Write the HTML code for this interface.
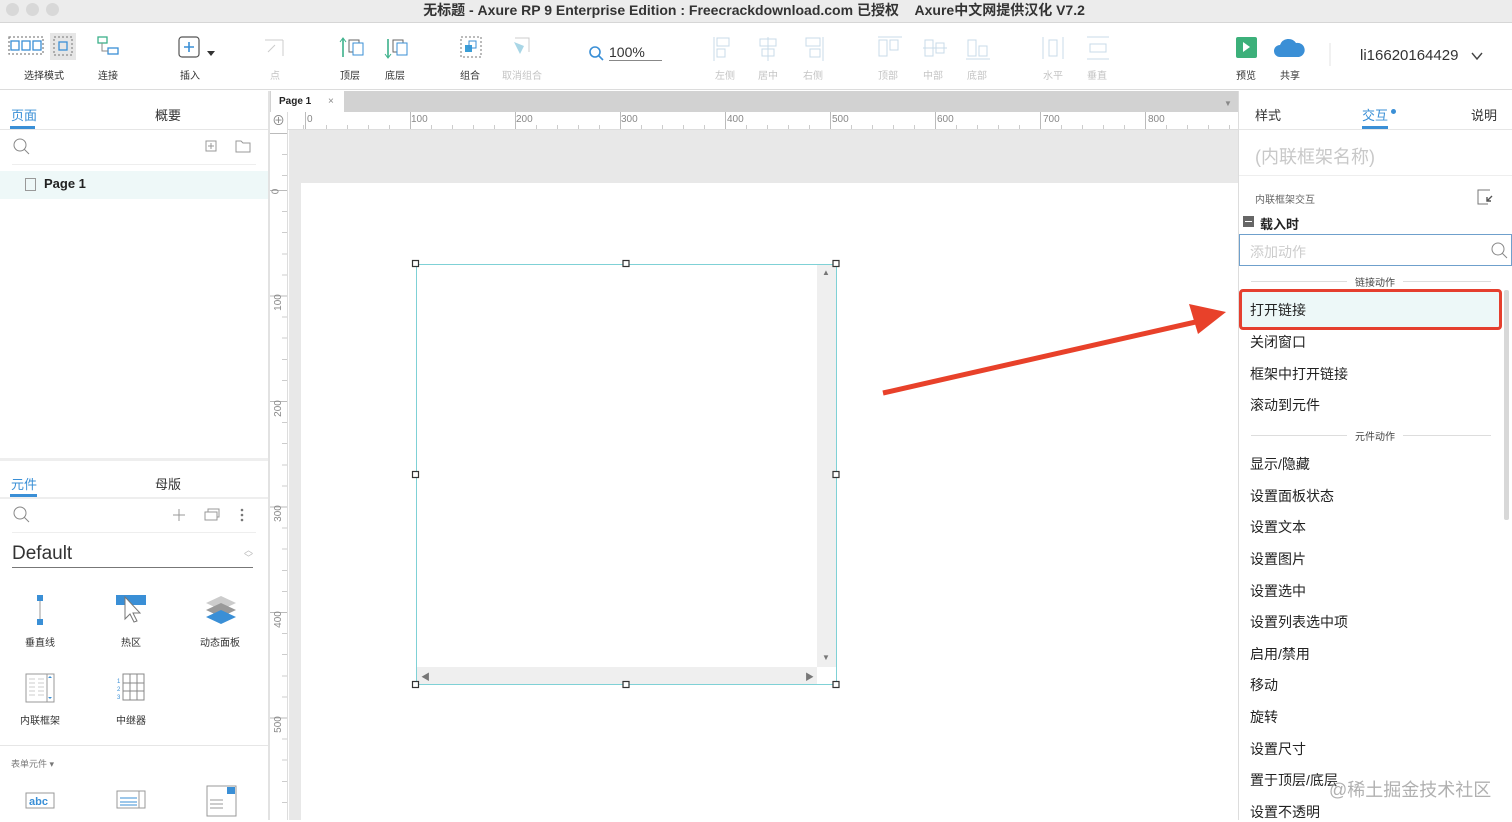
<!DOCTYPE html>
<html><head><meta charset="utf-8">
<style>
*{margin:0;padding:0;box-sizing:border-box}
body{width:1512px;height:820px;overflow:hidden;position:relative;background:#fff;font-family:"Liberation Sans","Noto Sans CJK SC",sans-serif;color:#333}
.a{position:absolute}
.lbl{position:absolute;font-size:10px;color:#333;transform:translateX(-50%);white-space:nowrap;top:67px}
.g{color:#c4c4c4}
.menu div.it{position:absolute;left:11px;font-size:14px;color:#222}
</style></head><body>
<!-- title bar -->
<div class="a" style="left:0;top:0;width:1512px;height:23px;background:#ececec;border-bottom:1px solid #d6d6d6"></div>
<div class="a" style="left:6px;top:3px;width:13px;height:13px;border-radius:50%;background:#d8d8d8"></div>
<div class="a" style="left:26px;top:3px;width:13px;height:13px;border-radius:50%;background:#d8d8d8"></div>
<div class="a" style="left:46px;top:3px;width:13px;height:13px;border-radius:50%;background:#d8d8d8"></div>
<div class="a" style="left:0;width:1508px;top:0px;text-align:center;font-size:14px;color:#333;font-weight:bold">无标题 - Axure RP 9 Enterprise Edition : Freecrackdownload.com 已授权&nbsp;&nbsp;&nbsp;&nbsp;Axure中文网提供汉化 V7.2</div>
<!-- toolbar -->
<div class="a" style="left:0;top:24px;width:1512px;height:66px;background:#fff;border-bottom:1px solid #dcdcdc"></div>
<svg class="a" style="left:0;top:30px" width="1512" height="36">
<g fill="none" stroke="#3a8fd6" stroke-width="1.3">
<rect x="11" y="11" width="8" height="9"/><rect x="22" y="11" width="8" height="9"/><rect x="33" y="11" width="8" height="9"/>
<rect x="9" y="7" width="34" height="17" stroke="#888" stroke-dasharray="2 2"/>
</g>
<rect x="50" y="3" width="26" height="27" fill="#e6e6e6"/>
<rect x="54" y="7" width="18" height="18" fill="none" stroke="#777" stroke-dasharray="2 2"/>
<rect x="59" y="12" width="8" height="8" fill="none" stroke="#3a8fd6" stroke-width="1.3"/>
<rect x="98" y="7" width="9" height="6" fill="none" stroke="#3cb08a" stroke-width="1.3"/>
<rect x="108" y="18" width="10" height="6" fill="none" stroke="#3a8fd6" stroke-width="1.3"/>
<path d="M102 13v8h6" stroke="#888" fill="none"/>
<rect x="179" y="7" width="20" height="20" rx="3" fill="none" stroke="#555" stroke-width="1.2"/>
<path d="M189 12v10M184 17h10" stroke="#3a8fd6" stroke-width="1.6"/>
<path d="M207 21l4 5 4-5z" fill="#333"/>
<path d="M265 10h18M283 10v16M268 22l7-7" stroke="#ccc" fill="none"/>
<path d="M343 9v18" stroke="#3cb08a" stroke-width="1.6"/><path d="M340 12l3-4 3 4" stroke="#3cb08a" fill="none"/>
<rect x="349" y="10" width="10" height="12" fill="none" stroke="#666"/><rect x="353" y="13" width="10" height="12" fill="#fff" stroke="#3a8fd6"/>
<path d="M388 9v18" stroke="#3cb08a" stroke-width="1.6"/><path d="M385 24l3 4 3-4" stroke="#3cb08a" fill="none"/>
<rect x="393" y="10" width="10" height="12" fill="none" stroke="#666"/><rect x="397" y="13" width="10" height="12" fill="#fff" stroke="#3a8fd6"/>
<rect x="461" y="7" width="20" height="20" fill="none" stroke="#777" stroke-dasharray="2 2"/>
<rect x="465" y="15" width="7" height="7" fill="#3a9ed6"/><rect x="469" y="11" width="7" height="7" fill="none" stroke="#3a8fd6"/>
<path d="M514 12l10 4-4 8z" fill="#a9d6e6"/><path d="M515 8h14v14" stroke="#ccc" fill="none"/>
<circle cx="595" cy="22" r="5" fill="none" stroke="#3a8fd6" stroke-width="1.6"/><path d="M599 26l4 4" stroke="#3a8fd6" stroke-width="1.6"/>
<g stroke="#c8dbe8" fill="none">
<path d="M714 7v24"/><rect x="717" y="8" width="12" height="8"/><rect x="717" y="19" width="8" height="8"/>
<path d="M768 7v24"/><rect x="760" y="9" width="16" height="7"/><rect x="762" y="19" width="12" height="7"/>
<path d="M823 7v24"/><rect x="806" y="8" width="14" height="8"/><rect x="810" y="19" width="10" height="8"/>
<path d="M878 7h24"/><rect x="879" y="10" width="8" height="16"/><rect x="890" y="10" width="8" height="10"/>
<path d="M923 18h24"/><rect x="925" y="10" width="8" height="16"/><rect x="936" y="13" width="8" height="10"/>
<path d="M966 29h24"/><rect x="968" y="10" width="8" height="16"/><rect x="979" y="16" width="8" height="10"/>
<path d="M1043 7v22M1063 7v22"/><rect x="1049" y="10" width="8" height="16"/>
<path d="M1087 7h22M1087 29h22"/><rect x="1090" y="14" width="16" height="8"/>
</g>
<rect x="1236" y="7" width="21" height="21" rx="2" fill="#3cb07a"/><path d="M1243 12v10l7-5z" fill="#fff"/>
<path d="M1280 27a6 6 0 0 1 0-12 9 9 0 0 1 16-2 7 7 0 0 1 3 14z" fill="#3a8fd6"/>
<path d="M1330 13v30" stroke="#e3e3e3"/>
<path d="M1472 23l5 6 5-6" stroke="#444" fill="none" stroke-width="1.4"/>
</svg>
<div class="lbl" style="left:44px">选择模式</div>
<div class="lbl" style="left:108px">连接</div>
<div class="lbl" style="left:190px">插入</div>
<div class="lbl g" style="left:275px">点</div>
<div class="lbl" style="left:350px">顶层</div>
<div class="lbl" style="left:395px">底层</div>
<div class="lbl" style="left:470px">组合</div>
<div class="lbl g" style="left:522px">取消组合</div>
<div class="a" style="left:609px;top:44px;font-size:14px;color:#333;border-bottom:1px solid #888;width:53px">100%</div>
<div class="lbl g" style="left:725px">左侧</div>
<div class="lbl g" style="left:768px">居中</div>
<div class="lbl g" style="left:813px">右侧</div>
<div class="lbl g" style="left:888px">顶部</div>
<div class="lbl g" style="left:933px">中部</div>
<div class="lbl g" style="left:977px">底部</div>
<div class="lbl g" style="left:1053px">水平</div>
<div class="lbl g" style="left:1097px">垂直</div>
<div class="lbl" style="left:1246px">预览</div>
<div class="lbl" style="left:1290px">共享</div>
<div class="a" style="left:1360px;top:47px;font-size:15px;color:#333">li16620164429</div>

<!-- left panel -->
<div class="a" style="left:0;top:91px;width:270px;height:729px;background:#fff;border-right:2px solid #e2e2e2"></div>
<div class="a" style="left:11px;top:105px;font-size:13px;color:#3a8fd6">页面</div>
<div class="a" style="left:10px;top:126px;width:25px;height:3px;background:#3a8fd6"></div>
<div class="a" style="left:155px;top:105px;font-size:13px">概要</div>
<div class="a" style="left:0;top:129px;width:268px;height:1px;background:#e6e6e6"></div>
<svg class="a" style="left:0;top:135px" width="268" height="25"><circle cx="20" cy="10" r="6" fill="none" stroke="#888"/><path d="M24 14l5 5" stroke="#888"/><rect x="206" y="6" width="10" height="10" fill="none" stroke="#999"/><path d="M211 8v6M208 11h6" stroke="#999"/><path d="M236 6h5l2 2h7v9h-14z" fill="none" stroke="#999"/></svg>
<div class="a" style="left:12px;top:164px;width:244px;height:1px;background:#eee"></div>
<div class="a" style="left:0;top:171px;width:268px;height:28px;background:#eef8f8"></div>
<div class="a" style="left:25px;top:178px;width:11px;height:13px;border:1px solid #999"></div>
<div class="a" style="left:44px;top:176px;font-size:13px;font-weight:bold;color:#222">Page 1</div>
<div class="a" style="left:0;top:458px;width:268px;height:3px;background:#eee"></div>
<div class="a" style="left:11px;top:474px;font-size:13px;color:#3a8fd6">元件</div>
<div class="a" style="left:10px;top:494px;width:27px;height:3px;background:#3a8fd6"></div>
<div class="a" style="left:155px;top:474px;font-size:13px">母版</div>
<div class="a" style="left:0;top:497px;width:268px;height:2px;background:#eee"></div>
<svg class="a" style="left:0;top:503px" width="268" height="25"><circle cx="20" cy="10" r="6" fill="none" stroke="#888"/><path d="M24 14l5 5" stroke="#888"/><path d="M179 6v12M173 12h12" stroke="#999"/><rect x="205" y="9" width="12" height="8" fill="none" stroke="#999"/><path d="M208 9v-3h11v8h-2" fill="none" stroke="#999"/><circle cx="242" cy="7" r="1.3" fill="#777"/><circle cx="242" cy="12" r="1.3" fill="#777"/><circle cx="242" cy="17" r="1.3" fill="#777"/></svg>
<div class="a" style="left:12px;top:532px;width:244px;height:1px;background:#eee"></div>
<div class="a" style="left:12px;top:543px;font-size:19px;color:#333">Default</div>
<div class="a" style="left:244px;top:546px;font-size:9px;color:#bbb;line-height:8px">︿<br>﹀</div>
<div class="a" style="left:12px;top:567px;width:241px;height:1px;background:#777"></div>
<svg class="a" style="left:0;top:590px" width="268" height="230">
<path d="M40 8v24" stroke="#999"/><rect x="37" y="5" width="6" height="6" fill="#3a8fd6"/><rect x="37" y="29" width="6" height="6" fill="#3a8fd6"/>
<rect x="116" y="5" width="30" height="10" fill="#3a8fd6"/><path d="M125 7v22l5-5 4 8 3-1-4-8 7 0z" fill="#fff" stroke="#777"/>
<path d="M221 6l15 7-15 7-15-7z" fill="#ccc"/><path d="M221 13l15 7-15 7-15-7z" fill="#999"/><path d="M221 20l15 7-15 7-15-7z" fill="#3a8fd6"/>
<rect x="26" y="84" width="28" height="28" fill="#fff" stroke="#999"/><path d="M47 84v28" stroke="#999"/>
<g stroke="#ccc"><path d="M29 89h6M38 89h6M29 93h6M38 93h6M29 97h6M38 97h6M29 101h6M38 101h6M29 105h6M38 105h6"/></g>
<path d="M48 88l2-2 2 2z" fill="#3a8fd6"/><path d="M48 107l2 2 2-2z" fill="#3a8fd6"/>
<g stroke="#888" fill="none"><rect x="123" y="84" width="21" height="26"/><path d="M123 93h21M123 101h21M130 84v26M137 84v26"/></g>
<text x="117" y="93" font-size="6" fill="#3a8fd6">1</text><text x="117" y="101" font-size="6" fill="#3a8fd6">2</text><text x="117" y="109" font-size="6" fill="#3a8fd6">3</text>
<rect x="26" y="203" width="28" height="15" fill="#fff" stroke="#999"/><text x="29" y="215" font-size="11" fill="#3a8fd6" font-weight="bold">abc</text>
<rect x="117" y="201" width="28" height="17" fill="#fff" stroke="#999"/><path d="M120 208h17M120 212h17M120 215h17" stroke="#3a8fd6"/><path d="M139 201v17" stroke="#999"/>
<rect x="207" y="196" width="29" height="30" fill="#fff" stroke="#999"/><rect x="227" y="197" width="8" height="7" fill="#3a8fd6"/><path d="M210 210h13M210 214h13M210 218h13" stroke="#999"/>
</svg>
<div class="a" style="left:25px;top:634px;font-size:10px">垂直线</div>
<div class="a" style="left:121px;top:634px;font-size:10px">热区</div>
<div class="a" style="left:200px;top:634px;font-size:10px">动态面板</div>
<div class="a" style="left:20px;top:712px;font-size:10px">内联框架</div>
<div class="a" style="left:116px;top:712px;font-size:10px">中继器</div>
<div class="a" style="left:0;top:745px;width:268px;height:1px;background:#e6e6e6"></div>
<div class="a" style="left:11px;top:757px;font-size:9px;color:#777">表单元件 ▾</div>

<!-- canvas -->
<div class="a" style="left:270px;top:91px;width:968px;height:21px;background:#d2d2d2"></div>
<div class="a" style="left:271px;top:91px;width:73px;height:21px;background:#fff;font-size:10px;font-weight:bold;padding:5px 0 0 8px;color:#222">Page 1 <span style="font-weight:normal;color:#888;margin-left:14px">×</span></div>
<div class="a" style="left:1224px;top:99px;font-size:8px;color:#888">▼</div>
<div class="a" style="left:270px;top:112px;width:968px;height:18px;background:#fff;border-bottom:1px solid #ddd;
background-image:repeating-linear-gradient(90deg,#bbb 0 1px,transparent 1px 105px),repeating-linear-gradient(90deg,#ccc 0 1px,transparent 1px 21px);background-size:100% 18px,100% 5px;background-position:35px 0,35px 13px;background-repeat:repeat-x"></div>
<div class="a" style="left:270px;top:112px;width:18px;height:18px;background:#fff;color:#888;font-size:13px;text-align:center;line-height:17px;border-right:1px solid #ddd">⊕</div>
<div class="a" style="left:270px;top:130px;width:18px;height:690px;background:#fff;border-right:1px solid #ddd;
background-image:repeating-linear-gradient(180deg,#bbb 0 1px,transparent 1px 105.5px),repeating-linear-gradient(180deg,#ccc 0 1px,transparent 1px 21.1px);background-size:18px 100%,5px 100%;background-position:0 60px,12px 60px;background-repeat:repeat-y"></div>
<div class="a" style="left:289px;top:130px;width:949px;height:690px;background:#e8e8e8"></div>
<div class="a" style="left:301px;top:183px;width:937px;height:637px;background:#fff"></div>
<div style="position:absolute;left:0;top:0;font-size:10px;color:#888">
<span class="a" style="left:307px;top:114px">0</span><span class="a" style="left:411px;top:114px">100</span><span class="a" style="left:516px;top:114px">200</span><span class="a" style="left:621px;top:114px">300</span><span class="a" style="left:727px;top:114px">400</span><span class="a" style="left:832px;top:114px">500</span><span class="a" style="left:937px;top:114px">600</span><span class="a" style="left:1043px;top:114px">700</span><span class="a" style="left:1148px;top:114px">800</span>
<span class="a" style="left:273px;top:186px;transform:rotate(-90deg)">0</span>
<span class="a" style="left:270px;top:297px;transform:rotate(-90deg)">100</span>
<span class="a" style="left:270px;top:403px;transform:rotate(-90deg)">200</span>
<span class="a" style="left:270px;top:508px;transform:rotate(-90deg)">300</span>
<span class="a" style="left:270px;top:614px;transform:rotate(-90deg)">400</span>
<span class="a" style="left:270px;top:719px;transform:rotate(-90deg)">500</span>
</div>
<!-- frame -->
<div class="a" style="left:416px;top:264px;width:421px;height:421px;border:1px solid #7fd1d6;background:#fff"></div>
<div class="a" style="left:817px;top:265px;width:19px;height:402px;background:#efefef"></div>
<div class="a" style="left:417px;top:667px;width:400px;height:17px;background:#efefef"></div>
<div class="a" style="left:822px;top:268px;font-size:8px;color:#777">▲</div>
<div class="a" style="left:822px;top:653px;font-size:8px;color:#777">▼</div>
<div class="a" style="left:421px;top:670px;font-size:9px;color:#777">◀</div>
<div class="a" style="left:805px;top:670px;font-size:9px;color:#777">▶</div>
<svg class="a" style="left:0;top:0" width="1512" height="820">
<g fill="#fff" stroke="#333" stroke-width="1.2">
<rect x="412.5" y="260.5" width="6" height="6"/><rect x="623" y="260.5" width="6" height="6"/><rect x="833" y="260.5" width="6" height="6"/>
<rect x="412.5" y="471.5" width="6" height="6"/><rect x="833" y="471.5" width="6" height="6"/>
<rect x="412.5" y="681.5" width="6" height="6"/><rect x="623" y="681.5" width="6" height="6"/><rect x="833" y="681.5" width="6" height="6"/>
</g>
<path d="M883 393L1200 321" stroke="#e8412a" stroke-width="5"/>
<path d="M1226 312L1189 304L1198 334Z" fill="#e8412a"/>
</svg>

<!-- right panel -->
<div class="a" style="left:1238px;top:91px;width:274px;height:729px;background:#fff;border-left:1px solid #ddd"></div>
<div class="a" style="left:1255px;top:105px;font-size:13px">样式</div>
<div class="a" style="left:1362px;top:105px;font-size:13px;color:#3a8fd6">交互</div>
<div class="a" style="left:1391px;top:109px;width:5px;height:5px;border-radius:50%;background:#3a8fd6"></div>
<div class="a" style="left:1362px;top:126px;width:26px;height:3px;background:#3a8fd6"></div>
<div class="a" style="left:1471px;top:105px;font-size:13px">说明</div>
<div class="a" style="left:1239px;top:129px;width:273px;height:1px;background:#e6e6e6"></div>
<div class="a" style="left:1255px;top:143px;font-size:18px;color:#c8c8c8">(内联框架名称)</div>
<div class="a" style="left:1239px;top:175px;width:273px;height:1px;background:#eee"></div>
<div class="a" style="left:1255px;top:191px;font-size:10px;color:#666">内联框架交互</div>
<svg class="a" style="left:1476px;top:188px" width="20" height="18"><path d="M14 2H2v14h10" fill="none" stroke="#777"/><path d="M16 8l-5 5M11 9v4h4" fill="none" stroke="#555" stroke-width="1.4"/></svg>
<div class="a" style="left:1243px;top:216px;width:11px;height:11px;background:#666"><div style="margin:5px 2px;height:1px;background:#fff"></div></div>
<div class="a" style="left:1260px;top:214px;font-size:13px;font-weight:bold;color:#222">载入时</div>
<div class="a menu" style="left:1239px;top:234px;width:273px;height:586px;background:#fff">
<div class="a" style="left:0;top:0;width:273px;height:32px;border:1px solid #6fa0cc;background:#fff"></div>
<div class="a" style="left:11px;top:8px;font-size:14px;color:#ccc">添加动作</div>
<svg class="a" style="left:251px;top:7px" width="20" height="20"><circle cx="8" cy="8" r="6" fill="none" stroke="#888"/><path d="M12 12l5 5" stroke="#888"/></svg>
<div class="a" style="left:265px;top:56px;width:5px;height:230px;background:#d8d8d8;border-radius:2px"></div>
<div class="a" style="left:12px;top:47px;width:240px;height:1px;background:#ddd"></div>
<div class="a" style="left:108px;top:40px;padding:0 8px;background:#fff;font-size:10px;color:#444">链接动作</div>
<div class="a" style="left:0;top:55px;width:263px;height:41px;background:#edf8f8;border:3px solid #e53f2e;border-radius:4px"></div>
<div class="it" style="top:66px">打开链接</div>
<div class="it" style="top:98px">关闭窗口</div>
<div class="it" style="top:130px">框架中打开链接</div>
<div class="it" style="top:161px">滚动到元件</div>
<div class="a" style="left:12px;top:201px;width:240px;height:1px;background:#ddd"></div>
<div class="a" style="left:108px;top:194px;padding:0 8px;background:#fff;font-size:10px;color:#444">元件动作</div>
<div class="it" style="top:220px">显示/隐藏</div>
<div class="it" style="top:252px">设置面板状态</div>
<div class="it" style="top:283px">设置文本</div>
<div class="it" style="top:315px">设置图片</div>
<div class="it" style="top:347px">设置选中</div>
<div class="it" style="top:378px">设置列表选中项</div>
<div class="it" style="top:410px">启用/禁用</div>
<div class="it" style="top:441px">移动</div>
<div class="it" style="top:473px">旋转</div>
<div class="it" style="top:505px">设置尺寸</div>
<div class="it" style="top:536px">置于顶层/底层</div>
<div class="it" style="top:568px">设置不透明</div>
</div>
<div class="a" style="left:1329px;top:776px;font-size:18px;color:rgba(150,150,150,0.75)">@稀土掘金技术社区</div>
</body></html>
